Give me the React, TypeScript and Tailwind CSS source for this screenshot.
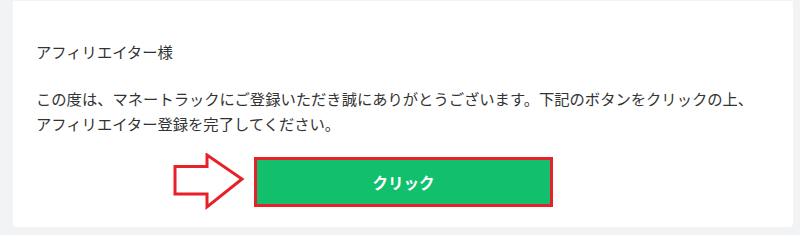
const FONT = "font-['Meiryo','Noto_Sans_CJK_JP',sans-serif]"

function ArrowIcon() {
  return (
    <svg width="72" height="58" viewBox="0 0 72 58" fill="none" className="shrink-0">
      <path
        d="M2 13.5 H34 V2 L69 26 L34 54 V41 H2 Z"
        stroke="#e8202a"
        strokeWidth="3"
        strokeLinejoin="miter"
        fill="#fff"
      />
    </svg>
  )
}

export default function App() {
  return (
    <div className={`w-[800px] h-[235px] bg-[#f2f3f5] pt-px ${FONT}`}>
      <div className="ml-[13px] w-[780px] h-[226px] bg-white rounded-b-[4px] pl-[23px] text-[15.3px] leading-[25px] text-[#333]">
        <p className="pt-[38px]">アフィリエイター様</p>
        <p className="mt-[22px]">
          この度は、マネートラックにご登録いただき誠にありがとうございます。下記のボタンをクリックの上、
          <br />
          アフィリエイター登録を完了してください。
        </p>
        <div className="mt-[17px] flex items-center ml-[137px]">
          <ArrowIcon />
          <a
            href="#"
            className="ml-[9px] flex h-[50px] w-[299px] items-center justify-center border-[3px] border-[#e8202a] bg-[#12bf6c] text-[15.5px] font-bold text-white"
          >
            クリック
          </a>
        </div>
      </div>
    </div>
  )
}
